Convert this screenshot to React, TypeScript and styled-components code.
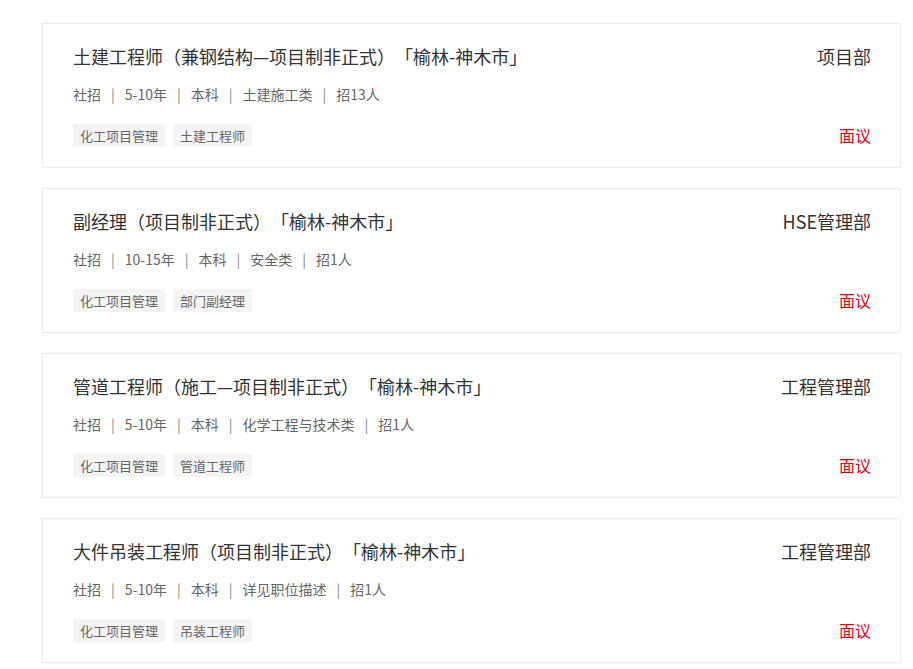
import React from "react";
import styled, { createGlobalStyle } from "styled-components";

const GlobalStyle = createGlobalStyle`
    body {
        margin: 0;
        background: #fff;
        font-family: "Microsoft YaHei", "Noto Sans CJK SC", "Noto Sans", sans-serif;
        text-spacing-trim: space-all;
    }
`;

const List = styled.div`
    display: flex;
    flex-direction: column;
    gap: 20px;
    padding: 23px 12px 0 42px;
`;

const Card = styled.div`
    display: flex;
    justify-content: space-between;
    border: 1px solid #ebebeb;
    background: #fff;
    padding: 20px 29px 20px 30px;
`;

const Main = styled.div`
    display: flex;
    flex-direction: column;
`;

const Title = styled.div`
    font-size: 18px;
    line-height: 24px;
    color: #333;
`;

const Meta = styled.div`
    display: flex;
    align-items: center;
    margin-top: 16px;
    font-size: 14px;
    line-height: 20px;
    color: #666;
`;

const Sep = styled.span`
    margin: 0 10px;
    color: #888;
`;

const Tags = styled.div`
    display: flex;
    gap: 8px;
    margin-top: 20px;
`;

const Tag = styled.span`
    background: #f4f4f4;
    color: #666;
    font-size: 13px;
    line-height: 23px;
    padding: 0 7px;
    border-radius: 2px;
`;

const Side = styled.div`
    display: flex;
    flex-direction: column;
    justify-content: space-between;
    align-items: flex-end;
`;

const Dept = styled.div`
    font-size: 18px;
    line-height: 24px;
    color: #333;
`;

const Salary = styled.div`
    font-size: 16px;
    line-height: 23px;
    color: #e60012;
`;

type Job = {
    title: string;
    meta: string[];
    tags: string[];
    dept: string;
};

const jobs: Job[] = [
    {
        title: "土建工程师（兼钢结构—项目制非正式）「榆林-神木市」",
        meta: ["社招", "5-10年", "本科", "土建施工类", "招13人"],
        tags: ["化工项目管理", "土建工程师"],
        dept: "项目部",
    },
    {
        title: "副经理（项目制非正式）「榆林-神木市」",
        meta: ["社招", "10-15年", "本科", "安全类", "招1人"],
        tags: ["化工项目管理", "部门副经理"],
        dept: "HSE管理部",
    },
    {
        title: "管道工程师（施工—项目制非正式）「榆林-神木市」",
        meta: ["社招", "5-10年", "本科", "化学工程与技术类", "招1人"],
        tags: ["化工项目管理", "管道工程师"],
        dept: "工程管理部",
    },
    {
        title: "大件吊装工程师（项目制非正式）「榆林-神木市」",
        meta: ["社招", "5-10年", "本科", "详见职位描述", "招1人"],
        tags: ["化工项目管理", "吊装工程师"],
        dept: "工程管理部",
    },
];

const App = (): JSX.Element => {
    return (
        <React.Fragment>
            <GlobalStyle />
            <List>
                {jobs.map((job, i) => (
                    <Card key={i}>
                        <Main>
                            <Title>{job.title}</Title>
                            <Meta>
                                {job.meta.map((m, j) => (
                                    <React.Fragment key={j}>
                                        {j > 0 ? <Sep>|</Sep> : null}
                                        <span>{m}</span>
                                    </React.Fragment>
                                ))}
                            </Meta>
                            <Tags>
                                {job.tags.map((t) => (
                                    <Tag key={t}>{t}</Tag>
                                ))}
                            </Tags>
                        </Main>
                        <Side>
                            <Dept>{job.dept}</Dept>
                            <Salary>面议</Salary>
                        </Side>
                    </Card>
                ))}
            </List>
        </React.Fragment>
    );
};

export default App;
